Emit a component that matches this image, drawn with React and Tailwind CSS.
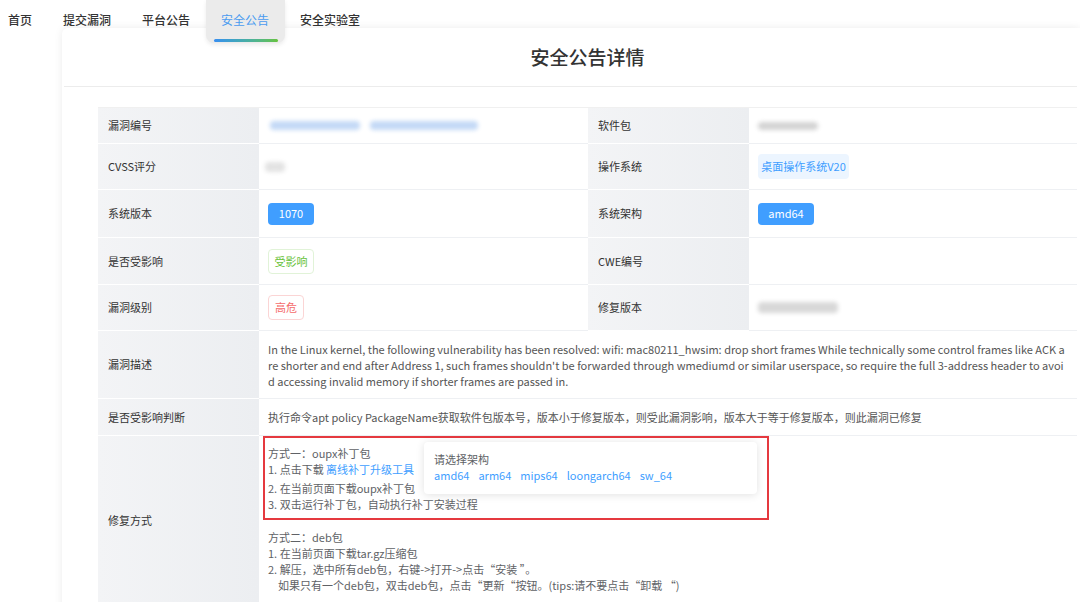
const FONT = { fontFamily: '"Noto Sans CJK SC", "Noto Sans", sans-serif' };

const NAV = ["首页", "提交漏洞", "平台公告", "安全公告", "安全实验室"];

function Label({ children, className = "" }) {
  return (
    <div className={`flex items-center border-b border-white bg-gradient-to-r from-[#f3f4f6] to-[#eceef1] pl-[10px] text-[11px] text-[#333] ${className}`}>
      {children}
    </div>
  );
}

function Value({ children, className = "" }) {
  return (
    <div className={`flex items-center border-b border-[#eef0f3] bg-white pl-[9px] text-[11px] text-[#555] ${className}`}>
      {children}
    </div>
  );
}

function Blur({ className }) {
  return <div className={`rounded-sm blur-[2px] ${className}`} />;
}

function Tag({ children, className }) {
  return (
    <span className={`inline-flex items-center justify-center rounded-[4px] text-[11px] ${className}`}>
      {children}
    </span>
  );
}

export default function App() {
  const archs = ["amd64", "arm64", "mips64", "loongarch64", "sw_64"];
  return (
    <div className="h-[602px] w-[1080px] overflow-hidden bg-white" style={FONT}>
      {/* top nav */}
      <div className="relative z-10 flex h-[43px] items-start pl-[8px] pr-4">
        {NAV.map((n, i) => {
          const active = n === "安全公告";
          return (
            <div
              key={n}
              className={
                active
                  ? "relative flex h-[43px] items-start rounded-b-[8px] bg-[#ebebeb] px-[15.5px] pt-[11px] text-[12px] text-[#4a9bf0] shadow-[0_2px_4px_rgba(0,0,0,0.08)]"
                  : `flex h-[43px] items-start pt-[11px] text-[12px] font-medium text-[#333] ${i === 0 ? "pr-[15.5px]" : "px-[15.5px]"}`
              }
            >
              {n}
              {active && (
                <span className="absolute bottom-[1px] left-[8px] right-[7px] h-[3px] rounded-full bg-gradient-to-r from-[#3a8ef0] to-[#67c23a]" />
              )}
            </div>
          );
        })}
      </div>

      {/* card */}
      <div className="-mt-[15px] ml-[62px] h-[600px] rounded-tl-[6px] bg-white pl-[36px] pr-[3px] shadow-[0_0_8px_rgba(0,0,0,0.08)]">
        <div className="flex h-[58px] items-center justify-center text-[19px] font-medium text-[#333]">
          安全公告详情
        </div>
        <div className="-ml-[34px] h-px bg-[#ececec]" />
        <div className="h-[20px]" />

        <div className="grid grid-cols-[161px_329px_161px_1fr] border-t border-[#f0f0f0]">
          <Label className="h-[36px]">漏洞编号</Label>
          <Value className="h-[36px] gap-[10px]">
            <Blur className="ml-[2px] h-[9px] w-[90px] bg-[#c4d9f6]" />
            <Blur className="h-[9px] w-[108px] bg-[#c4d9f6]" />
          </Value>
          <Label className="h-[36px]">软件包</Label>
          <Value className="h-[36px]">
            <Blur className="h-[8px] w-[60px] bg-[#d3d3d3]" />
          </Value>

          <Label className="h-[46px]">CVSS评分</Label>
          <Value className="h-[46px]">
            <Blur className="-ml-[3px] h-[10px] w-[20px] bg-[#e3e3e3]" />
          </Value>
          <Label className="h-[46px]">操作系统</Label>
          <Value className="h-[46px]">
            <Tag className="h-[25px] w-[91px] bg-[#ecf5ff] text-[#409eff]">桌面操作系统V20</Tag>
          </Value>

          <Label className="h-[48px]">系统版本</Label>
          <Value className="h-[48px]">
            <Tag className="h-[22px] w-[46px] bg-[#409eff] text-white">1070</Tag>
          </Value>
          <Label className="h-[48px]">系统架构</Label>
          <Value className="h-[48px]">
            <Tag className="h-[22px] w-[56px] bg-[#409eff] text-white">amd64</Tag>
          </Value>

          <Label className="h-[47px]">是否受影响</Label>
          <Value className="h-[47px]">
            <Tag className="h-[25px] w-[46px] border border-[#e1f3d8] bg-white text-[#67c23a]">受影响</Tag>
          </Value>
          <Label className="h-[47px]">CWE编号</Label>
          <Value className="h-[47px]" />

          <Label className="h-[46px]">漏洞级别</Label>
          <Value className="h-[46px]">
            <Tag className="h-[25px] w-[36px] border border-[#fbd5d5] bg-white text-[#f56c6c]">高危</Tag>
          </Value>
          <Label className="h-[46px]">修复版本</Label>
          <Value className="h-[46px]">
            <Blur className="h-[11px] w-[80px] bg-[#d8d8d8]" />
          </Value>

          <Label className="h-[68px]">漏洞描述</Label>
          <Value className="col-span-3 h-[68px] pr-[9px]">
            <p className="break-all leading-[16px]">
              In the Linux kernel, the following vulnerability has been resolved: wifi: mac80211_hwsim: drop short frames While technically some control frames like ACK are shorter and end after Address 1, such frames shouldn't be forwarded through wmediumd or similar userspace, so require the full 3-address header to avoid accessing invalid memory if shorter frames are passed in.
            </p>
          </Value>

          <Label className="h-[37px]">是否受影响判断</Label>
          <Value className="col-span-3 h-[37px]">
            执行命令apt policy PackageName获取软件包版本号，版本小于修复版本，则受此漏洞影响，版本大于等于修复版本，则此漏洞已修复
          </Value>

          <Label className="h-[170px]">修复方式</Label>
          <div className="col-span-3 h-[170px] bg-white pl-[4px] text-[11px] text-[#606266]">
            <div className="relative h-[84px] w-[506px] border-2 border-[#e5393f] pl-[3px] pt-[7px] leading-[16px]">
              <div>方式一：oupx补丁包</div>
              <div className="h-[19px]">
                1. 点击下载 <span className="text-[#409eff]">离线补丁升级工具</span>
              </div>
              <div>2. 在当前页面下载oupx补丁包</div>
              <div>3. 双击运行补丁包，自动执行补丁安装过程</div>

              <div className="absolute left-[159px] top-[4px] h-[52px] w-[333px] rounded-[4px] bg-white pl-[10px] pt-[9px] shadow-[0_1px_8px_rgba(0,0,0,0.12)]">
                <div className="leading-[16px] text-[#606266]">请选择架构</div>
                <div className="flex gap-[9px] leading-[16px] text-[#409eff]">
                  {archs.map((a) => (
                    <span key={a}>{a}</span>
                  ))}
                </div>
              </div>
            </div>
            <div className="pl-[5px] pt-[9px] leading-[16px]">
              <div>方式二：deb包</div>
              <div>1. 在当前页面下载tar.gz压缩包</div>
              <div>2. 解压，选中所有deb包，右键-&gt;打开-&gt;点击“安装 ”。</div>
              <div className="pl-[10px]">如果只有一个deb包，双击deb包，点击“更新“按钮。(tips:请不要点击“卸载 “)</div>
            </div>
          </div>
        </div>
      </div>
    </div>
  );
}
